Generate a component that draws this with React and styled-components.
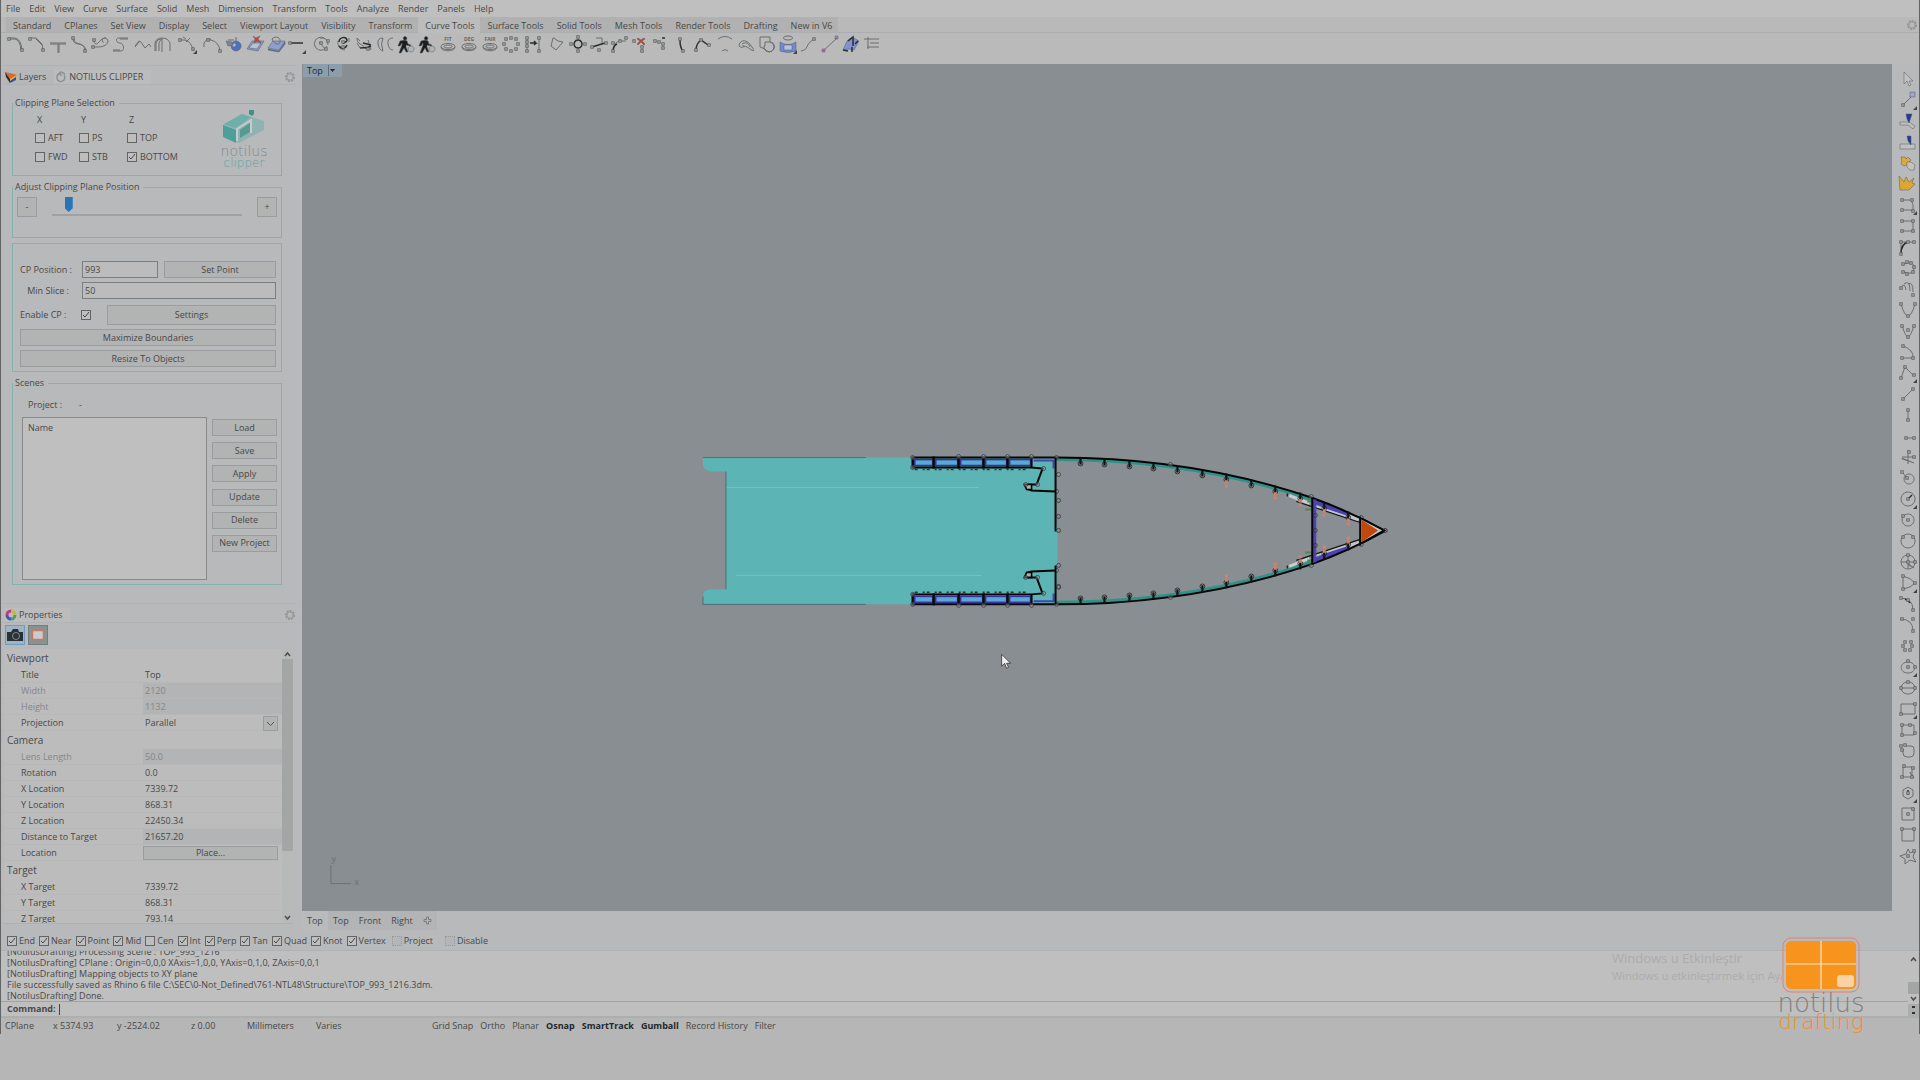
import React, { useState } from 'react';
import styled, { createGlobalStyle } from 'styled-components';

const GlobalStyle = createGlobalStyle`
  * {
    box-sizing: border-box;
  }

  body {
    margin: 0;
    background: #b5b6b5;
    color: #484848;
    font-family: 'Open Sans', 'Noto Sans', sans-serif;
    font-size: 9px;
    line-height: 12px;
  }

  button,
  input,
  select {
    font: inherit;
    color: inherit;
    margin: 0;
  }
`;

const Page = styled.div`
  display: flex;
  flex-direction: column;
  height: 100vh;
  padding-bottom: 46px;
  overflow: hidden;
`;

const Window = styled.div`
  position: relative;
  flex: 1;
  min-height: 0;
  display: flex;
  flex-direction: column;
  border-left: 1px solid #626466;
  border-right: 1px solid #626466;
  background: #b8b9ba;
`;

const PlainButton = styled.button`
  display: flex;
  align-items: center;
  padding: 0;
  border: none;
  background: none;
  white-space: nowrap;
`;

/* ---------- top bars ---------- */

const MenuBar = styled.nav`
  display: flex;
  gap: 9px;
  height: 17px;
  padding: 1px 5px 0;
  background: #bfbfbf;
`;

const TabBar = styled.div`
  display: flex;
  height: 16px;
  padding-left: 5px;
  background: #b9b9b9;
  border-bottom: 1px solid #aaaeb0;
`;

const ToolTab = styled(PlainButton)`
  padding: 2px 6px 0 7px;
  background: ${(p) => (p.$active ? '#bcbcbc' : '#b1b1b1')};
  height: ${(p) => (p.$active ? '16px' : '15px')};
`;

const TabBarEnd = styled.div`
  margin-left: auto;
  display: flex;
  align-items: center;
  padding-right: 1px;
`;

const ToolBar = styled.div`
  display: flex;
  height: 31px;
  padding: 0 5px;
  background: #bababa;
`;

const ToolButton = styled(PlainButton)`
  flex: none;
  width: 21px;
  height: 21px;
  margin-right: ${(p) => (p.$gap ? '4px' : '0')};
`;

const IconSvg = styled.svg`
  display: block;
  flex: none;
`;

const Middle = styled.div`
  flex: 1;
  min-height: 0;
  display: flex;
`;

/* ---------- left dock ---------- */

const Dock = styled.aside`
  flex: none;
  width: 301px;
  display: flex;
  flex-direction: column;
  padding: 1px 5px 6px 3px;
`;

const PanelHeader = styled.div`
  flex: none;
  display: flex;
  align-items: center;
  height: 20px;
  border-top: 1px solid #b0b2b4;
  border-bottom: 1px solid #b0b2b4;
  padding: 4px 1px 0 0;

  > :last-child {
    margin-left: auto;
  }
`;

const PanelTab = styled(PlainButton)`
  gap: 2px;
  height: 14px;
  padding: 0 8px 0 1px;
  background: ${(p) => (p.$active ? '#bcbcbd' : '#b5b7b8')};
`;

const Groups = styled.div`
  flex: none;
  display: flex;
  flex-direction: column;
  padding: 12px 15px 13px 8px;
`;

const Group = styled.fieldset`
  margin: 0 0 5px;
  min-width: 0;
  height: ${(p) => p.$height};
  border: 1px solid #83b3ac;
  padding: ${(p) => p.$pad || '0 4px'};

  > legend {
    padding: 0 4px 0 2px;
    margin-left: -4px;
  }
`;

const SelectionBody = styled.div`
  display: flex;
  justify-content: space-between;
  padding-left: 18px;
`;

const AxisTable = styled.div`
  display: grid;
  grid-template-columns: 44px 48px 60px;
  grid-auto-rows: 19px;
  align-items: center;

  > span {
    padding: 2px 0 0 2px;
  }
`;

const CheckLabel = styled.label`
  display: flex;
  align-items: center;
  gap: ${(p) => p.$gap || '3px'};
  white-space: nowrap;
`;

const CheckBox = styled.input.attrs({ type: 'checkbox' })`
  appearance: none;
  flex: none;
  width: 10px;
  height: 10px;
  border: 1px solid #646464;
  background: #bebebe;

  &:checked {
    background: #bebebe
      url("data:image/svg+xml,%3Csvg xmlns='http://www.w3.org/2000/svg' viewBox='0 0 8 8'%3E%3Cpath d='M1 4l2 2 4-5' fill='none' stroke='%23484848'/%3E%3C/svg%3E")
      center / 8px 8px no-repeat;
  }

  &:disabled {
    border: 1px dotted #999;
    background: #b3b5b6;
  }
`;

const ClipperLogo = styled.div`
  display: flex;
  flex-direction: column;
  align-items: center;
  width: 66px;
  color: #7f8b8d;
  font-family: 'DejaVu Sans', sans-serif;
  font-size: 14px;
  font-weight: 200;
  line-height: 14px;

  > span:last-child {
    color: #5fa19e;
    font-size: 12px;
    line-height: 10px;
  }
`;

const PushButton = styled.button`
  padding: 0;
  border: 1px solid #9b9c9d;
  background: #b2b3b3;
  height: ${(p) => p.$height || '17px'};
  line-height: 12px;
  white-space: nowrap;
`;

const SliderRow = styled.div`
  display: grid;
  grid-template-columns: 20px 1fr 20px;
  column-gap: 15px;
  margin-top: 4px;
`;

const Slider = styled.input.attrs({ type: 'range' })`
  appearance: none;
  width: 100%;
  height: 20px;
  background: linear-gradient(#a0a1a2, #a0a1a2) 0 17px / 100% 2px no-repeat;

  &::-webkit-slider-runnable-track {
    height: 20px;
  }

  &::-webkit-slider-thumb {
    appearance: none;
    width: 8px;
    height: 15px;
    background: #2676b6;
    clip-path: polygon(0 0, 100% 0, 100% 75%, 50% 100%, 0 75%);
  }
`;

const PositionGrid = styled.div`
  display: grid;
  grid-template-columns: 56px 76px 1fr;
  column-gap: 6px;
  row-gap: 4px;
  align-items: center;

  > label {
    text-align: right;
    padding-right: 7px;
    white-space: nowrap;
  }
`;

const TextBox = styled.input.attrs({ type: 'text' })`
  width: 100%;
  min-width: 0;
  height: 17px;
  border: 1px solid #7c7d7e;
  background: #bcbcbc;
  padding: 0 2px;
  grid-column: ${(p) => (p.$wide ? 'span 2' : 'auto')};
`;

const EnableRow = styled.div`
  display: grid;
  grid-template-columns: 61px 26px 1fr;
  align-items: center;
  margin: 6px 0 4px;
`;

const Stack = styled.div`
  display: flex;
  flex-direction: column;
  gap: 4px;
`;

const ProjectRow = styled.div`
  display: flex;
  gap: 17px;
  padding: 10px 0 6px 11px;
`;

const ScenesBody = styled.div`
  display: grid;
  grid-template-columns: 1fr 65px;
  column-gap: 5px;
  padding-left: 5px;
`;

const SceneTable = styled.table`
  width: 100%;
  height: 163px;
  border: 1px solid #88898a;
  background: #bfbfbf;
  border-spacing: 0;

  th {
    padding: 4px 5px;
    text-align: left;
    vertical-align: top;
    font-weight: 400;
  }
`;

const SceneButtons = styled.div`
  display: flex;
  flex-direction: column;
  justify-content: space-between;
  height: 135px;
  padding-top: 2px;
`;

const PageButtons = styled.div`
  flex: none;
  display: flex;
  gap: 3px;
  padding: 2px 1px 4px;
`;

const PageButton = styled(PlainButton)`
  justify-content: center;
  width: 20px;
  height: 20px;
  border: 1px solid ${(p) => (p.$active ? '#6f9cc0' : '#767c7c')};
  background: ${(p) => (p.$active ? '#9fb3c2' : '#879293')};
`;

const PropertyArea = styled.div`
  flex: 1;
  min-height: 0;
  display: flex;
  overflow: hidden;
  margin-right: 4px;
  border-bottom: 1px solid #aeb0b1;
`;

const PropertyTable = styled.table`
  flex: 1;
  align-self: flex-start;
  border-spacing: 0;
  table-layout: fixed;
  background: #bcbcbc;

  th {
    height: 18px;
    padding: 0 0 0 3px;
    text-align: left;
    font-size: 10px;
    font-weight: 400;
  }

  td {
    height: 16px;
    padding: 0;
    white-space: nowrap;
  }

  td:first-child {
    width: 139px;
    padding-left: 17px;
  }

  tr + tr td {
    box-shadow: inset 0 -1px #b8b8b9;
  }
`;

const PropertyRow = styled.tr`
  color: ${(p) => (p.$dim ? '#858687' : 'inherit')};

  > td:last-child {
    background: ${(p) => (p.$shade ? '#b2b4b5' : 'none')};
    padding-left: ${(p) => (p.$button ? '0' : '2px')};
    padding-right: ${(p) => (p.$button ? '4px' : '0')};
  }
`;

const PlaceButton = styled(PushButton)`
  display: block;
  width: 100%;
`;

const Projection = styled.select`
  appearance: none;
  display: block;
  width: calc(100% - 4px);
  height: 15px;
  padding: 0;
  border: none;
  background:
    url("data:image/svg+xml,%3Csvg xmlns='http://www.w3.org/2000/svg' viewBox='0 0 15 15'%3E%3Cpath d='M.5.5h14v14H.5z' fill='%23b2b3b3' stroke='%239b9c9d'/%3E%3Cpath d='M4 6l3.500 3.500 3.500-3.500' fill='none' stroke='%23555'/%3E%3C/svg%3E")
    right center / 15px 15px no-repeat;
`;

const Scrollbar = styled.div`
  flex: none;
  width: 11px;
  display: flex;
  flex-direction: column;
  justify-content: space-between;
  align-items: center;
  background: #b8b9b9;
`;

const ScrollThumb = styled.div`
  width: 11px;
  height: ${(p) => p.$size};
  ${(p) => (p.$low ? 'margin-top: auto;' : 'margin-bottom: auto;')}
  background: #a4a5a5;
`;

/* ---------- viewport ---------- */

const ViewArea = styled.div`
  flex: 1;
  min-width: 0;
  display: flex;
  flex-direction: column;
`;

const Viewport = styled.main`
  position: relative;
  flex: 1;
  min-width: 0;
  background: #888e91;
`;

const ViewTitle = styled(PlainButton)`
  position: absolute;
  top: 0;
  left: 1px;
  height: 13px;
  padding: 0 4px;
  gap: 5px;
  background: #8c9dac;
  color: #222b33;
`;

const Drawing = styled.svg`
  display: block;
  width: 100%;
  height: 100%;
`;

const SideBar = styled.div`
  flex: none;
  width: 27px;
  padding: 4px 0 0 6px;
  overflow: hidden;

  > button {
    height: 21px;
  }
`;

/* ---------- bottom ---------- */

const ViewTabs = styled.div`
  flex: none;
  display: flex;
  height: 19px;

  > button {
    padding: 0 5px;
  }
`;

const ViewTab = styled(PlainButton)`
  background: ${(p) => (p.$active ? '#b9babb' : '#b2b4b6')};
`;

const OsnapBar = styled.div`
  display: flex;
  align-items: center;
  gap: 4px;
  height: 20px;
  padding: 1px 0 0 6px;
`;

const LooseLabel = styled(CheckLabel)`
  margin: 0 6px 0 2px;
`;

const CommandArea = styled.div`
  display: flex;
  border-top: 1px solid #b0b1b2;
  border-bottom: 2px solid #adaeae;
  background: #bfbfbf;
`;

const CommandText = styled.div`
  flex: 1;
  min-width: 0;
`;

const Log = styled.div`
  display: flex;
  flex-direction: column;
  justify-content: flex-end;
  height: 51px;
  overflow: hidden;
  padding-left: 6px;
  border-bottom: 1px solid #a2a3a3;
  line-height: 11px;
  white-space: nowrap;

  > div {
    flex: none;
  }
`;

const Prompt = styled.label`
  display: flex;
  gap: 3px;
  height: 14px;
  align-items: center;
  padding-left: 6px;
  font-weight: 700;
`;

const PromptInput = styled.input`
  flex: 1;
  height: 11px;
  border: none;
  border-left: 1px solid #444;
  background: none;
  padding: 0 2px;
  outline: none;
`;

const LogScroll = styled.div`
  flex: none;
  width: 11px;
  display: flex;
  flex-direction: column;
  align-items: center;
  justify-content: space-between;
  padding-top: 3px;
`;

const StatusBar = styled.div`
  display: flex;
  height: 16px;
  padding-left: 4px;
  background: #b5b6b5;
`;

const StatusCell = styled.span`
  flex: none;
  width: ${(p) => p.$width};
  align-self: center;
`;

const StatusButton = styled(PlainButton)`
  margin-right: 7px;
  color: ${(p) => (p.$on ? '#23282c' : 'inherit')};
  font-weight: ${(p) => (p.$on ? 700 : 400)};
`;

const Watermark = styled.div`
  position: absolute;
  right: 137px;
  bottom: 50px;
  width: 170px;
  overflow: hidden;
  color: #acacac;
  font-size: 11px;
  line-height: 17px;
  white-space: nowrap;

  > div:first-child {
    font-size: 13px;
  }
`;

const Brand = styled.div`
  position: absolute;
  right: 43px;
  bottom: 3px;
  width: 110px;
  display: flex;
  flex-direction: column;
  align-items: center;
  color: #7e8283;
  font-family: 'DejaVu Sans', sans-serif;
  font-size: 26px;
  font-weight: 200;
  line-height: 20px;

  > span:last-child {
    color: #f58d2c;
    font-size: 22px;
    line-height: 18px;
  }
`;

/* ---------- icons ---------- */

// d: strokes, dark: heavy strokes, pts: square handles, fills: [colour, path], fly: fly-out corner
const Icon = ({ d, dark, pts = [], fills = [], text, fly }) => (
  <IconSvg width="20" height="20" viewBox="0 0 20 20" fill="none" aria-hidden="true">
    {fills.map(([color, path]) => (
      <path key={path} d={path} fill={color} stroke="#555b60" strokeWidth="0.5" />
    ))}
    {d && <path d={d} stroke="#6c6d6e" strokeWidth="1" />}
    {dark && <path d={dark} stroke="#2c2d2e" strokeWidth="1.5" />}
    {pts.map(([x, y]) => (
      <rect key={`${x}-${y}`} x={x - 1.2} y={y - 1.2} width="2.4" height="2.4" fill="#bbb" stroke="#5d5e5f" strokeWidth="0.9" />
    ))}
    {text && (
      <text x="10" y="7" textAnchor="middle" fontSize="5" fontWeight="700" fill="#666">
        {text}
      </text>
    )}
    {fly && <path d="M19 16v4h-4z" fill="#444" />}
  </IconSvg>
);

const walker = {
  fills: [
    ['#1d1d1d', 'M9 2.500a1.800 1.800 0 1 0 .1 0zM4 7l5-1 2 1 1 3 3 1-1 1-4-1v2l2 5h-2l-2-4-3 5H3l3-8V9l-2 3H2z'],
    ['#aeb3b6', 'M15 12a3 3 0 1 0 .1 0z'],
  ],
};

const disc = (text) => ({
  text,
  d: 'M3 12.500c0-4 14-4 14 0s-14 4-14 0M6 12.500c0-2 8-2 8 0s-8 2-8 0M3 13c0 5 14 5 14 0',
});

const curveIcons = [
  { name: 'Fillet curves', d: 'M3 4h6q6 1 7 12M3 5h6q5 1 6 11', pts: [[3, 5], [16, 16]] },
  { name: 'Chamfer curves', d: 'M3 4h6l6 6 1 6M9 5l6 6', pts: [[3, 5], [16, 16]] },
  { name: 'Connect', d: 'M2 9h16M2 10h16M10 10v9M11 10v9' },
  { name: 'Connect curves', d: 'M4 5c0 8 12 2 13 12M5 5c0 7 11 2 11 12', pts: [[4, 4], [16, 17]] },
  { name: 'Blend', d: 'M4 6c0 4 2 5 4 3s6-7 9-4-1 8-9 8H3M16 4c-4-1-5 5-2 4', pts: [[4, 6], [3, 13]] },
  { name: 'Adjustable blend', d: 'M17 4H8c-4 0-3 5 1 5s5 8 1 8H2M17 5H9M2 16h7' },
  { name: 'Arc blend', d: 'M3 12l4-5 2 1 4 6 4-4 2 3M3 13l4-5', pts: [] },
  { name: 'Match curve', d: 'M2 17V9q1-5 7-5t8 5v8M3 17V9q1-4 5-4M6 17V9q1-3 3-4M9 4v14', gap: true },
  { name: 'Offset', d: 'M2 6h5q7 2 8 11M5 3l3 2M8 8l4-4', pts: [[2, 6], [15, 15]], fly: true, gap: true },
  { name: 'Symmetry', d: 'M5 6h3q8 2 9 11M5 5h3M1 9l4-5M1 9v4', pts: [[5, 6], [17, 17]] },
  { name: 'Curve booleans', fills: [['#4f70bd', 'M12 7a5 5 0 1 0 .1 0z'], ['#aeb9d9', 'M10 9a2 2 0 1 0 .1 0z'], ['#7c8890', 'M2 7l6 1 1 3-5 1z']], d: 'M12 3v5M4 6h6' },
  { name: 'Delete surface', fills: [['#8a9ccb', 'M2 15l5-8h12l-6 10z'], ['#b9c0cf', 'M4 14l4-5h8l-4 6z'], ['#d5432f', 'M8 2l3 2 4-2-2 3 3 4-4-2-3 2 1-4z']] },
  { name: 'Project', fills: [['#8d9fd0', 'M2 14l5-7h12l-6 9z'], ['#5269b5', 'M2 15l11 2 6-9v2l-6 8-11-2z']], d: 'M6 5c4-4 9-1 8 3s-6 2-8-3' },
  { name: 'Extend line', dark: 'M4 9h12', pts: [[3, 9]], fly: true, gap: true },
  { name: 'Rebuild', d: 'M12 4a6.500 6.500 0 1 0 3 8M7 8l7 8M8 4q8-1 8 7', pts: [[9, 9], [14, 15], [16, 7]] },
  { name: 'Simplify', dark: 'M6 8c0-5 7-6 8-2 0 3-4 2-4 4M6 12c3 4 7 2 8-1', d: 'M5 7c-1 5 3 9 7 9M16 4v4', pts: [[10, 8], [10, 13]] },
  { name: 'Pull curve', dark: 'M6 14c4-1 6 1 11-2M9 9l8 2', d: 'M3 4c0 7 5 5 9 11M3 4l3 3M14 6l3 10M3 9l3 5', pts: [[14, 15]] },
  { name: 'Parallel offset', d: 'M8 4Q2 4 3 10t5 7M8 4Q5 10 8 17M18 4q-6 0-5 6t5 6' },
  { name: 'Walk one', ...walker },
  { name: 'Walk two', ...walker },
  { name: 'Fit', ...disc('FIT') },
  { name: 'Degree', ...disc('DEG') },
  { name: 'Fair', ...disc('FAIR') },
  { name: 'Control points', pts: [[5, 5], [10, 4], [15, 5], [17, 10], [15, 15], [10, 17], [5, 15], [3, 10]] },
  { name: 'Edit points', dark: 'M8 9h6l-2-2M14 9l-2 2', d: 'M5 4v13M17 4v13', pts: [[5, 4], [5, 8], [5, 12], [5, 17], [17, 4], [17, 17]], gap: true },
  { name: 'Polygon', d: 'M6 4l-2 8 5 4 7-8-5-1-4-3z' },
  { name: 'Point handles', dark: 'M10 6a4 4 0 1 0 .1 0z', pts: [[10, 3], [17, 10], [10, 17], [3, 10]] },
  { name: 'Handlebar', dark: 'M3 13l13-4', d: 'M7 4h6v5', pts: [[3, 13], [10, 16], [17, 9]] },
  { name: 'Add knot', d: 'M3 16q1-8 7-9h6', dark: 'M3 16q1-5 4-6', pts: [[3, 9], [3, 17], [10, 7], [16, 4]] },
  { name: 'Remove knot', pts: [[3, 7], [11, 13], [11, 17]], fills: [['#d33b2b', 'M7 4l3 2 3-2 1 1-3 2 3 3-1 1-3-3-3 3-1-1 3-3-3-2z']] },
  { name: 'Add kink', pts: [[3, 7], [11, 10], [11, 14], [7, 8]], dark: 'M10 4h3' },
  { name: 'Weight', dark: 'M7 6q0 8 3 11', pts: [[7, 5], [10, 17]] },
  { name: 'Insert line', dark: 'M2 16q0-6 5-10l7 5', pts: [[2, 16], [7, 6], [15, 11]] },
  { name: 'Arc dashes', d: 'M3 5q7-5 14 0M7 17q3-3 6 0' },
  { name: 'Close curve', d: 'M3 11c2-6 8-6 13 2s-3 1-5 0-4 0-4-2M6 10c3-2 6-2 8 3M3 11c1 4 4 2 6 1' },
  { name: 'Curve boolean', d: 'M3 3h10v5M3 3v10l5 2M13 8a5 5 0 1 1-6 4h1V8h5M14 8a5 5 0 1 1-6 7' },
  { name: 'Contour', fills: [['#6f8ad0', 'M2 8q8 5 16 0v9q-8 3-16 0z'], ['#b7c2da', 'M6 11h8v5H6z']], d: 'M10 2c-6 0-6 4 0 4s6-4 0-4', fly: true },
  { name: 'Curve through points', d: 'M2 17c8-1 4-7 12-11', pts: [[15, 5]] },
  { name: 'Line', d: 'M3 17L17 4', fills: [['#d96bd0', 'M2 15h3v3H2zM15 2h3v3h-3z']] },
  { name: 'Convert', fills: [['#8192cf', 'M2 16l4-9 5-4 7 4-5 9-5-1z']], dark: 'M7 7l5-4v9M11 13v5M2 16l5 1M14 10l3-3' },
  { name: 'Section', d: 'M6 3v12M2 5h15M5 13h12M8 9h9' },
];

const arc = 'M2 4q13 0 13 12';

const mainIcons = [
  { name: 'Pointer', fills: [['#c2c2c2', 'M6 3v12l3-3 2 5 2-1-2-4h4z']] },
  { name: 'Points', d: 'M6 14l7-7', pts: [[5, 15]], fills: [['#9fa3d0', 'M12 2h5v5h-5z']], fly: true },
  { name: 'Join', fills: [['#bfc0c0', 'M2 11h9l6 4-2 3-5-4H2z'], ['#26389a', 'M8 3h6l-3 9-2-4z']] },
  { name: 'Trim', fills: [['#bfc0c0', 'M2 12h15v5H2z'], ['#26389a', 'M9 4h4v9l-3-4z']] },
  { name: 'Explode', fills: [['#dba93c', 'M3 4h4l1 2 2-2 3 3-2 2v3H8l-2 1-3-2 1-3z'], ['#c2c5ba', 'M9 9h4l4 3-1 5h-4l-3-3z']] },
  { name: 'Burst', fills: [['#e0a52c', 'M1 2l5 6 2-5 3 5 5-4-2 5 3 1-6 6H2z']] },
  { name: 'Boundary', d: 'M4 5h9q3 4 2 10H4', pts: [[4, 5], [14, 5], [4, 15], [15, 16]], fly: true },
  { name: 'Rectangle points', d: 'M4 5h11v10H4', pts: [[4, 5], [15, 5], [4, 15], [15, 15]] },
  { name: 'Corner', dark: 'M3 17q0-10 7-12', d: 'M3 5h13M3 5v11', pts: [[3, 5], [3, 17], [10, 5], [16, 5]] },
  { name: 'Closed', pts: [[5, 6], [9, 4], [13, 5], [16, 9], [15, 14], [9, 16], [5, 14]], d: 'M6 6q10-4 10 4t-10 4' },
  { name: 'Spiral', d: 'M3 8q4-5 5 3M6 5q6-5 6 7M10 5q5-3 5 8', pts: [[3, 9], [15, 16]] },
  { name: 'Parabola', d: 'M3 4q7 24 14 0', pts: [[3, 4], [10, 16], [17, 4]] },
  { name: 'Parabola focus', d: 'M4 4q6 23 12 0', pts: [[4, 5], [10, 16], [16, 5], [10, 9]] },
  { name: 'Conic', d: 'M5 4q11 4 10 12H4', pts: [[5, 4], [15, 16], [4, 16]] },
  { name: 'Polyline', d: 'M3 15l4-11 9 9', pts: [[3, 15], [7, 4], [16, 12]], fly: true },
  { name: 'Segment', d: 'M4 16L16 4', pts: [[5, 15], [15, 5]] },
  { name: 'Vertical', d: 'M10 5v9', pts: [[10, 5], [10, 15]] },
  { name: 'Horizontal', d: 'M8 12h8', pts: [[8, 12], [16, 12]] },
  { name: 'Axis line', d: 'M10 3v14M4 10h13', pts: [[11, 5], [16, 10]], fills: [['#bd5a5a', 'M4 11l12 5-12-4z']] },
  { name: 'Circle tangent', d: 'M11 6a5 5 0 1 0 .1 0zM4 4l6 7', pts: [[4, 4], [9, 10]] },
  { name: 'Circle radius', d: 'M10 3a7 7 0 1 0 .1 0z', dark: 'M10 10l4-4', pts: [[10, 10]], fly: true },
  { name: 'Circle centre', d: 'M10 4a6 6 0 1 0 .1 0z', pts: [[10, 10], [5, 6]] },
  { name: 'Circle two point', d: 'M10 3a7 7 0 1 0 .1 0z', pts: [[5, 6], [15, 6]] },
  { name: 'Circle deform', d: 'M10 3a7 7 0 1 0 .1 0zM3 10h14M10 3v14', pts: [[10, 3], [10, 10], [17, 10]], fills: [['#b66', 'M11 12l5 4-6-3z']] },
  { name: 'Arc', d: 'M5 3v13M5 3q8 2 12 7-4 5-12 6', pts: [[5, 3], [5, 16], [17, 10]], fly: true },
  { name: 'Arc start', d: arc, dark: 'M7 5q4 2 5 4', pts: [[3, 4], [10, 6], [15, 16]] },
  { name: 'Arc end', d: arc, pts: [[4, 4], [15, 4], [15, 16]] },
  { name: 'Point cloud', pts: [[7, 6], [13, 6], [5, 10], [12, 14], [7, 14], [14, 10]] },
  { name: 'Ellipse', d: 'M10 5c-9 0-9 11 0 11s9-11 0-11', pts: [[10, 4], [10, 10], [17, 10]], fly: true },
  { name: 'Ellipse diameter', d: 'M10 4c-9 0-9 12 0 12s9-12 0-12M3 10h14', pts: [[3, 10], [17, 10], [10, 4]] },
  { name: 'Rectangle', d: 'M3 5h14v10H3z', pts: [[3, 15], [17, 5]], fly: true },
  { name: 'Rectangle centre', d: 'M4 5h12v10H4z', pts: [[4, 5], [4, 15], [17, 13], [12, 5]] },
  { name: 'Rounded rectangle', d: 'M8 5h5q3 0 3 3v4q0 4-4 4H9q-4 0-4-4V8', pts: [[3, 5], [7, 4], [4, 9]] },
  { name: 'Rectangle vertical', d: 'M5 5h9v10H5z', pts: [[6, 4], [15, 6], [4, 15], [14, 15]], fills: [['#b66', 'M12 10l4 6-4-5z']] },
  { name: 'Polygon', d: 'M10 4l5 3v6l-5 3-5-3V7z', dark: 'M10 7v5', pts: [[10, 10]], fly: true },
  { name: 'Square', d: 'M4 4h12v12H4z', pts: [[10, 10], [15, 5]] },
  { name: 'Square corners', d: 'M4 4h12v12H4z', pts: [[4, 4], [16, 4]] },
  { name: 'Star', d: 'M10 3l2 4 5-2-2 6 3 5-6-2-5 4v-5l-5-3 6-2z', pts: [[10, 10], [16, 5]] },
];

const Gear = () => (
  <IconSvg width="12" height="12" viewBox="0 0 12 12" fill="none">
    <circle cx="6" cy="6" r="4" stroke="#939596" strokeWidth="2" strokeDasharray="2 1" />
    <circle cx="6" cy="6" r="3" stroke="#9a9c9d" />
  </IconSvg>
);

const Chevron = ({ down }) => (
  <IconSvg width="11" height="10" viewBox="0 0 11 10" fill="none">
    <path d={down ? 'M3 3l2.500 3L8 3' : 'M3 7l2.500-3L8 7'} stroke="#4c4d4e" strokeWidth="1.500" />
  </IconSvg>
);

/* ---------- hull section ---------- */

const ribs = [[1080, 458], [1104, 459], [1129, 461], [1153, 463], [1177, 466], [1202, 470], [1226, 474], [1251, 480], [1275, 486], [1300, 493], [1324, 503], [1348, 512]];
const redRibs = [1226, 1275, 1300, 1324, 1348];
const cells = [[912, 21], [933, 25], [958, 25], [983, 24], [1007, 24]];
const hull = 'M1056 457C1140 457 1225 468 1311 497Q1350 511 1384 530';

const HalfHull = () => (
  <g>
    <path d="M1056 459C1140 459 1225 470 1311 499" stroke="#2f918a" strokeWidth="3" />
    <path d="M1289 495L1309 503" stroke="#c4d0cc" strokeWidth="3" />
    <path d="M1315 501L1347 514" stroke="#4c42b4" strokeWidth="5" />
    <path d="M1316 506L1358 520M1350 515l9 4" stroke="#c2c6c6" strokeWidth="2" />
    <path d="M1287 493v3M1296 501L1360 522" stroke="#141414" strokeWidth="1.2" />
    <path d={hull} stroke="#050505" strokeWidth="2" />
    {cells.map(([x, w]) => (
      <g key={x}>
        <rect x={x + 2} y="459" width={w - 3} height="6" fill="#58a9d4" stroke="#3a309f" strokeWidth="1.6" />
        <path d={`M${x} 456v12`} stroke="#050505" strokeWidth="2.4" />
      </g>
    ))}
    <path d="M1033 460h21M1053 460v8" stroke="#4a40b4" strokeWidth="2" />
    <path d="M912 457h144M912 467h119M1031 456v11M1031 467l11 1-6 16h-9l-2 2 3 3 3 1 24 1" stroke="#050505" strokeWidth="2" />
    <path d="M1024 484h7v5h-5z" fill="#9ba" stroke="#050505" strokeWidth="1.6" />
    <path d="M914 469h114" stroke="#333" strokeWidth="1.6" strokeDasharray="3 5 2 2" />
    {ribs.map(([x, y]) => (
      <g key={x}>
        <path d={`M${x} ${y - 1}v7`} stroke="#111" strokeWidth="2.2" />
        <circle cx={x} cy={y + 5} r="2.4" stroke="#222" strokeWidth="0.8" />
        {redRibs.includes(x) && (
          <path d={`M${x} ${y + 6}v7`} stroke="#d5806a" strokeWidth="3" strokeDasharray="3 1" />
        )}
      </g>
    ))}
    <path d="M1305 509h6M1307 501h5" stroke="#4c8a45" strokeWidth="2" />
    {[[912, 457], [912, 467], [958, 456], [983, 456], [1007, 456], [1031, 456], [1043, 468], [1037, 484], [1025, 484], [1056, 457], [1056, 491], [1058, 474], [1170, 464], [1311, 496], [1361, 517]].map(([x, y]) => (
      <circle key={`${x}-${y}`} cx={x} cy={y} r="2" stroke="#3a3a3a" strokeWidth="0.8" fill="#aab" fillOpacity="0.4" />
    ))}
  </g>
);

const HullDrawing = () => (
  <Drawing viewBox="302 63 1589 848" fill="none" role="img" aria-label="Hull section, top view">
    <path d="M702 457H1055V520L1057 530V565L1055 604H702V596Q702 589 709 589H725V471H709Q702 469 702 464z" fill="#5cb5b4" />
    <path d="M702 457h163M725 471v118M702 604h163M702 596v8" stroke="#4b6f72" />
    <path d="M726 487h252M735 575h246" stroke="#74c3c0" />
    <HalfHull />
    <g transform="translate(0 1061) scale(1 -1)">
      <HalfHull />
    </g>
    <path d="M1055 457v74M1055 565v39" stroke="#050505" strokeWidth="2" />
    {[500, 516, 530, 565, 586].map((y) => (
      <circle key={y} cx="1058" cy={y} r="2" stroke="#333" strokeWidth="0.8" />
    ))}
    <path d="M1314 499v63" stroke="#4c42b4" strokeWidth="4" />
    <path d="M1312 497v67M1360 516v29" stroke="#050505" strokeWidth="2" />
    {[515, 530, 545].map((y) => (
      <circle key={y} cx="1315" cy={y} r="2" stroke="#333" strokeWidth="0.8" />
    ))}
    <path d="M1361 518L1383 530 1361 543z" fill="#c9cbc9" />
    <path d="M1361 519L1378 530 1361 542z" fill="#c2470d" />
    <path d="M1361 518L1384 530 1361 543" stroke="#050505" strokeWidth="2" />
    <circle cx="1385" cy="530" r="2" stroke="#222" strokeWidth="0.8" />

    <path d="M329.500 865v18.500h20" stroke="#6c7173" />
    <text x="330" y="862" fontSize="9" fill="#6c7173">y</text>
    <text x="353" y="885" fontSize="9" fill="#6c7173">x</text>
    <path d="M1001 654v12l3-3 2 5 2-1-2-4h4z" fill="#eee" stroke="#333" strokeWidth="0.8" />
  </Drawing>
);

/* ---------- data ---------- */

const menus = ['File', 'Edit', 'View', 'Curve', 'Surface', 'Solid', 'Mesh', 'Dimension', 'Transform', 'Tools', 'Analyze', 'Render', 'Panels', 'Help'];

const toolTabs = ['Standard', 'CPlanes', 'Set View', 'Display', 'Select', 'Viewport Layout', 'Visibility', 'Transform', 'Curve Tools', 'Surface Tools', 'Solid Tools', 'Mesh Tools', 'Render Tools', 'Drafting', 'New in V6'];

const planes = ['AFT', 'PS', 'TOP', 'FWD', 'STB', 'BOTTOM'];

const properties = [
  { title: 'Viewport' },
  { label: 'Title', value: 'Top' },
  { label: 'Width', value: '2120', dim: true, shade: true },
  { label: 'Height', value: '1132', dim: true, shade: true },
  { label: 'Projection', select: 'Parallel' },
  { title: 'Camera' },
  { label: 'Lens Length', value: '50.0', dim: true, shade: true },
  { label: 'Rotation', value: '0.0' },
  { label: 'X Location', value: '7339.72' },
  { label: 'Y Location', value: '868.31' },
  { label: 'Z Location', value: '22450.34' },
  { label: 'Distance to Target', value: '21657.20', shade: true },
  { label: 'Location', button: 'Place...' },
  { title: 'Target' },
  { label: 'X Target', value: '7339.72' },
  { label: 'Y Target', value: '868.31' },
  { label: 'Z Target', value: '793.14' },
];

const snaps = ['End', 'Near', 'Point', 'Mid', 'Cen', 'Int', 'Perp', 'Tan', 'Quad', 'Knot', 'Vertex'];

const logLines = [
  '[NotilusDrafting] Processing Scene : TOP_993_1216',
  '[NotilusDrafting] CPlane : Origin=0,0,0 XAxis=1,0,0, YAxis=0,1,0, ZAxis=0,0,1',
  '[NotilusDrafting] Mapping objects to XY plane',
  'File successfully saved as Rhino 6 file C:\\SEC\\0-Not_Defined\\761-NTL48\\Structure\\TOP_993_1216.3dm.',
  '[NotilusDrafting] Done.',
];

const statusCells = [['CPlane', '48px'], ['x 5374.93', '64px'], ['y -2524.02', '74px'], ['z 0.00', '56px'], ['Millimeters', '69px'], ['Varies', '116px']];

const statusButtons = ['Grid Snap', 'Ortho', 'Planar', 'Osnap', 'SmartTrack', 'Gumball', 'Record History', 'Filter'];

const ClipperPanel = () => {
  const [position, setPosition] = useState('993');
  const [slice, setSlice] = useState('50');

  return (
    <Groups>
      <Group $height="79px">
        <legend>Clipping Plane Selection</legend>
        <SelectionBody>
          <AxisTable>
            <span>X</span>
            <span>Y</span>
            <span>Z</span>
            {planes.map((plane) => (
              <CheckLabel key={plane}>
                <CheckBox defaultChecked={plane === 'BOTTOM'} />
                {plane}
              </CheckLabel>
            ))}
          </AxisTable>
          <ClipperLogo>
            <IconSvg width="44" height="35" viewBox="0 0 44 35">
              <path d="M1 16L20 5l22 7v9L17 34 1 28z" fill="#8fb3b0" />
              <path d="M1 16l13 5v13L1 28z" fill="#4d9f9b" />
              <path d="M2 15L20 5l9 3-15 11z" fill="#6fafab" />
              <path d="M18 29v-8l10-7v9z" fill="#579995" />
              <path d="M15 32V20l14-9v13" fill="none" stroke="#c5cccb" strokeWidth="2" />
              <path d="M27 1h5v4l-2 2-3-2z" fill="#3f908c" />
            </IconSvg>
            <span>notilus</span>
            <span>clipper</span>
          </ClipperLogo>
        </SelectionBody>
      </Group>

      <Group $height="57px">
        <legend>Adjust Clipping Plane Position</legend>
        <SliderRow>
          <PushButton $height="20px">-</PushButton>
          <Slider defaultValue="7" aria-label="Clipping plane position" />
          <PushButton $height="20px">+</PushButton>
        </SliderRow>
      </Group>

      <Group $height="129px" $pad="17px 5px 0 7px">
        <PositionGrid>
          <label htmlFor="cp-position">CP Position :</label>
          <TextBox id="cp-position" value={position} onChange={(e) => setPosition(e.target.value)} />
          <PushButton>Set Point</PushButton>
          <label htmlFor="min-slice">Min Slice :</label>
          <TextBox id="min-slice" $wide value={slice} onChange={(e) => setSlice(e.target.value)} />
        </PositionGrid>
        <EnableRow>
          <label htmlFor="enable-cp">Enable CP :</label>
          <CheckBox id="enable-cp" defaultChecked />
          <PushButton $height="20px">Settings</PushButton>
        </EnableRow>
        <Stack>
          <PushButton>Maximize Boundaries</PushButton>
          <PushButton>Resize To Objects</PushButton>
        </Stack>
      </Group>

      <Group $height="208px">
        <legend>Scenes</legend>
        <ProjectRow>
          <span>Project :</span>
          <span>-</span>
        </ProjectRow>
        <ScenesBody>
          <SceneTable>
            <thead>
              <tr>
                <th>Name</th>
              </tr>
            </thead>
          </SceneTable>
          <SceneButtons>
            {['Load', 'Save', 'Apply', 'Update', 'Delete', 'New Project'].map((name) => (
              <PushButton key={name}>{name}</PushButton>
            ))}
          </SceneButtons>
        </ScenesBody>
      </Group>
    </Groups>
  );
};

const PropertiesPanel = () => (
  <>
    <PanelHeader>
      <PanelTab $active>
        <IconSvg width="12" height="12" viewBox="0 0 12 12" fill="none" strokeWidth="3">
          <path d="M6 2a4 4 0 0 1 4 4" stroke="#c9b53a" />
          <path d="M10 6a4 4 0 0 1-4 4" stroke="#4aa06a" />
          <path d="M6 10a4 4 0 0 1-4-4" stroke="#4a54b8" />
          <path d="M2 6a4 4 0 0 1 4-4" stroke="#b8407f" />
        </IconSvg>
        Properties
      </PanelTab>
      <Gear />
    </PanelHeader>
    <PageButtons>
      <PageButton $active aria-label="Camera">
        <IconSvg width="16" height="14" viewBox="0 0 16 14">
          <path d="M0 4h4l2-3h5l1 3h4v9H0z" fill="#2a3136" />
          <circle cx="9" cy="8" r="3.5" fill="#2a3136" stroke="#808b92" />
        </IconSvg>
      </PageButton>
      <PageButton aria-label="Viewport frame">
        <IconSvg width="14" height="12" viewBox="0 0 14 12">
          <path d="M1.500 1.500h11v9h-11z" fill="#cccccc" stroke="#c9776a" strokeWidth="1.500" />
        </IconSvg>
      </PageButton>
    </PageButtons>
    <PropertyArea>
      <PropertyTable>
        <tbody>
          {properties.map((p) =>
            p.title ? (
              <tr key={p.title}>
                <th colSpan="2">{p.title}</th>
              </tr>
            ) : (
              <PropertyRow key={p.label} $dim={p.dim} $shade={p.shade} $button={p.button}>
                <td>{p.label}</td>
                <td>
                  {p.value}
                  {p.select && (
                    <Projection aria-label={p.label}>
                      <option>{p.select}</option>
                    </Projection>
                  )}
                  {p.button && <PlaceButton $height="14px">{p.button}</PlaceButton>}
                </td>
              </PropertyRow>
            )
          )}
        </tbody>
      </PropertyTable>
      <Scrollbar>
        <Chevron />
        <ScrollThumb $size="192px" />
        <Chevron down />
      </Scrollbar>
    </PropertyArea>
  </>
);

const App = () => {
  const [activeTab, setActiveTab] = useState('Curve Tools');

  return (
    <Page>
      <GlobalStyle />
      <Window>
        <MenuBar>
          {menus.map((name) => (
            <PlainButton key={name}>{name}</PlainButton>
          ))}
        </MenuBar>
        <TabBar>
          {toolTabs.map((name) => (
            <ToolTab key={name} $active={name === activeTab} onClick={() => setActiveTab(name)}>
              {name}
            </ToolTab>
          ))}
          <TabBarEnd>
            <Gear />
          </TabBarEnd>
        </TabBar>
        <ToolBar>
          {curveIcons.map(({ name, gap, ...icon }) => (
            <ToolButton key={name} $gap={gap} aria-label={name}>
              <Icon {...icon} />
            </ToolButton>
          ))}
        </ToolBar>

        <Middle>
          <Dock>
            <PanelHeader>
              <PanelTab>
                <IconSvg width="12" height="12" viewBox="0 0 12 12">
                  <path d="M0 1l9 2 3 1-7 4z" fill="#e0662b" />
                  <path d="M0 1l5 7v4L1 6z" fill="#2d2d2d" />
                  <path d="M5 8l7-4v2l-7 4z" fill="#d8b23c" />
                  <path d="M5 10l6-4v3l-6 3z" fill="#3a4c9a" />
                </IconSvg>
                Layers
              </PanelTab>
              <PanelTab $active>
                <IconSvg width="12" height="12" viewBox="0 0 12 12" fill="none">
                  <path d="M6 2.500a4 4 0 1 0 3 1.500M2 4l4-3 4 2M6 3v2" stroke="#849497" strokeWidth="1.500" />
                </IconSvg>
                NOTILUS CLIPPER
              </PanelTab>
              <Gear />
            </PanelHeader>
            <ClipperPanel />
            <PropertiesPanel />
          </Dock>

          <ViewArea>
            <Middle>
              <Viewport>
                <ViewTitle>
                  Top
                  <IconSvg width="10" height="11" viewBox="0 0 10 11">
                    <path d="M.5 0v11" stroke="#5f6c78" />
                    <path d="M2 4h5L4.500 7z" fill="#20262b" />
                  </IconSvg>
                </ViewTitle>
                <HullDrawing />
              </Viewport>

              <SideBar>
                {mainIcons.map(({ name, ...icon }) => (
                  <ToolButton key={name} aria-label={name}>
                    <Icon {...icon} />
                  </ToolButton>
                ))}
              </SideBar>
            </Middle>

            <ViewTabs>
              {['Top', 'Top', 'Front', 'Right'].map((name, i) => (
                <ViewTab key={i} $active={i === 0}>
                  {name}
                </ViewTab>
              ))}
              <ViewTab aria-label="New viewport">
                <IconSvg width="9" height="9" viewBox="0 0 9 9">
                  <path d="M3.500 1h2v2.500H8v2H5.500V8h-2V5.500H1v-2h2.500z" fill="none" stroke="#7b7d7e" />
                </IconSvg>
              </ViewTab>
            </ViewTabs>
          </ViewArea>
        </Middle>

        <OsnapBar>
          {snaps.map((name) => (
            <CheckLabel key={name} $gap="2px">
              <CheckBox defaultChecked={name !== 'Cen'} />
              {name}
            </CheckLabel>
          ))}
          {['Project', 'Disable'].map((name) => (
            <LooseLabel key={name} $gap="2px">
              <CheckBox disabled />
              {name}
            </LooseLabel>
          ))}
        </OsnapBar>

        <CommandArea>
          <CommandText>
            <Log>
              {logLines.map((line) => (
                <div key={line}>{line}</div>
              ))}
            </Log>
            <Prompt>
              Command:
              <PromptInput />
            </Prompt>
          </CommandText>
          <LogScroll>
            <Chevron />
            <ScrollThumb $size="12px" $low />
            <Chevron down />
            <IconSvg width="11" height="12" viewBox="0 0 11 12">
              <path d="M0 0h11v12H0z" fill="#acadad" />
              <path d="M4 2h3v2H4zM4 8h3v2H4z" fill="#333" />
            </IconSvg>
          </LogScroll>
        </CommandArea>

        <StatusBar>
          {statusCells.map(([text, width]) => (
            <StatusCell key={text} $width={width}>
              {text}
            </StatusCell>
          ))}
          {statusButtons.map((name) => (
            <StatusButton key={name} $on={['Osnap', 'SmartTrack', 'Gumball'].includes(name)}>
              {name}
            </StatusButton>
          ))}
        </StatusBar>

        <Watermark>
          <div>Windows u Etkinleştir</div>
          <div>Windows u etkinleştirmek için Ayar</div>
        </Watermark>
        <Brand>
          <IconSvg width="78" height="56" viewBox="0 0 78 56" fill="none">
            <rect x="1" y="1" width="76" height="54" rx="8" stroke="#dd8376" />
            <rect x="4" y="4" width="70" height="48" rx="5" fill="#f7941d" />
            <path d="M39 4v48M4 27h70" stroke="#f6e4cf" strokeWidth="1.200" />
            <rect x="55" y="38" width="17" height="12" rx="3" fill="#fbd2a5" />
          </IconSvg>
          <span>notilus</span>
          <span>drafting</span>
        </Brand>
      </Window>
    </Page>
  );
};

export default App;
